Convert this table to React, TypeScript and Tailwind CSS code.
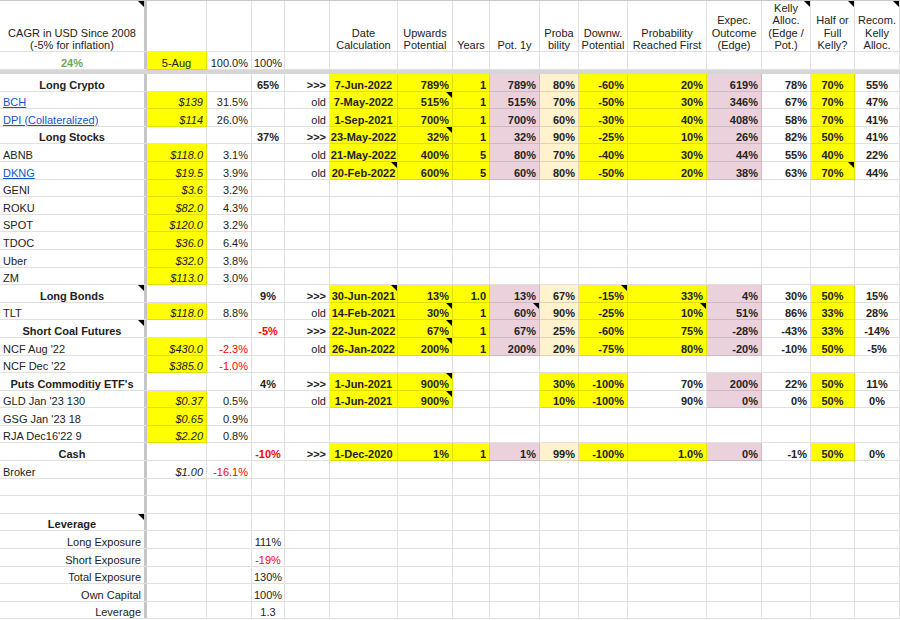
import clsx from "clsx";

type Cl = {
  t?: string;
  a?: "l" | "c" | "r";
  b?: boolean;
  i?: boolean;
  bg?: string;
  red?: boolean;
  green?: boolean;
  link?: boolean;
  tri?: boolean;
};

const Y = "bg-[#ffff00]";
const PK = "bg-[#ead1dc]";
const CR = "bg-[#fff2cc]";

const E: Cl = {};
const empties = (n: number): Cl[] => Array.from({ length: n }, () => ({}));

// F..P calculation block
const calc = (v: string[] | null, tris: number[] = [], puts = false): Cl[] => {
  if (!v) return empties(11);
  const fills = puts
    ? [Y, Y, "", "", Y, Y, "", PK, "", Y, ""]
    : [Y, Y, Y, PK, CR, Y, Y, PK, "", Y, ""];
  const al: ("c" | "r")[] = ["c", "r", "r", "r", "r", "r", "r", "r", "r", "c", "c"];
  return v.map((t, k) => ({ t, a: al[k], b: true, bg: fills[k] || undefined, tri: tris.includes(k) }));
};

type Opt = { red?: boolean; tris?: number[]; aTri?: boolean; puts?: boolean; link?: boolean; noFill?: boolean };

const group = (label: string, pct: string, v: string[], o: Opt = {}): Cl[] => [
  { t: label, a: "c", b: true, tri: o.aTri },
  E,
  E,
  { t: pct, a: "c", b: true, red: o.red },
  { t: ">>>", a: "r", b: true },
  ...calc(v, o.tris, o.puts),
];

const asset = (label: string, price: string, w: string, v: string[] | null = null, o: Opt = {}): Cl[] => [
  { t: label, a: "l", link: o.link },
  { t: price, a: "r", i: true, bg: o.noFill ? undefined : Y },
  { t: w, a: "r", red: o.red },
  E,
  v ? { t: "old", a: "r" } : E,
  ...calc(v, o.tris, o.puts),
];

const lev = (label: string, val: string, red = false): Cl[] => [
  { t: label, a: "r" },
  E,
  E,
  { t: val, a: "c", red },
  ...empties(12),
];

const header: Cl[] = [
  { t: "CAGR in USD Since 2008\n(-5% for inflation)", a: "c", tri: true },
  E,
  E,
  E,
  E,
  { t: "Date\nCalculation", a: "c" },
  { t: "Upwards\nPotential", a: "c" },
  { t: "Years", a: "c" },
  { t: "Pot. 1y", a: "c" },
  { t: "Proba\nbility", a: "c" },
  { t: "Downw.\nPotential", a: "c" },
  { t: "Probability\nReached First", a: "c" },
  { t: "Expec.\nOutcome\n(Edge)", a: "c" },
  { t: "Kelly\nAlloc.\n(Edge /\nPot.)", a: "c", tri: true },
  { t: "Half or\nFull\nKelly?", a: "c", tri: true },
  { t: "Recom.\nKelly\nAlloc.", a: "c", tri: true },
];

const second: Cl[] = [
  { t: "24%", a: "c", b: true, green: true },
  { t: "5-Aug", a: "c", bg: Y },
  { t: "100.0%", a: "r" },
  { t: "100%", a: "c" },
  ...empties(12),
];

const body: Cl[][] = [
  group("Long Crypto", "65%", ["7-Jun-2022", "789%", "1", "789%", "80%", "-60%", "20%", "619%", "78%", "70%", "55%"]),
  asset("BCH", "$139", "31.5%", ["7-May-2022", "515%", "1", "515%", "70%", "-50%", "30%", "346%", "67%", "70%", "47%"], { link: true, tris: [1] }),
  asset("DPI (Collateralized)", "$114", "26.0%", ["1-Sep-2021", "700%", "1", "700%", "60%", "-30%", "40%", "408%", "58%", "70%", "41%"], { link: true }),
  group("Long Stocks", "37%", ["23-May-2022", "32%", "1", "32%", "90%", "-25%", "10%", "26%", "82%", "50%", "41%"], { tris: [1] }),
  asset("ABNB", "$118.0", "3.1%", ["21-May-2022", "400%", "5", "80%", "70%", "-40%", "30%", "44%", "55%", "40%", "22%"]),
  asset("DKNG", "$19.5", "3.9%", ["20-Feb-2022", "600%", "5", "60%", "80%", "-50%", "20%", "38%", "63%", "70%", "44%"], { link: true, tris: [0, 9] }),
  asset("GENI", "$3.6", "3.2%"),
  asset("ROKU", "$82.0", "4.3%"),
  asset("SPOT", "$120.0", "3.2%"),
  asset("TDOC", "$36.0", "6.4%"),
  asset("Uber", "$32.0", "3.8%"),
  asset("ZM", "$113.0", "3.0%"),
  group("Long Bonds", "9%", ["30-Jun-2021", "13%", "1.0", "13%", "67%", "-15%", "33%", "4%", "30%", "50%", "15%"], { tris: [0, 5], aTri: true }),
  asset("TLT", "$118.0", "8.8%", ["14-Feb-2021", "30%", "1", "60%", "90%", "-25%", "10%", "51%", "86%", "33%", "28%"], { tris: [1, 3, 6] }),
  group("Short Coal Futures", "-5%", ["22-Jun-2022", "67%", "1", "67%", "25%", "-60%", "75%", "-28%", "-43%", "33%", "-14%"], { red: true, tris: [1], aTri: true }),
  asset("NCF Aug '22", "$430.0", "-2.3%", ["26-Jan-2022", "200%", "1", "200%", "20%", "-75%", "80%", "-20%", "-10%", "50%", "-5%"], { red: true, tris: [1] }),
  asset("NCF Dec '22", "$385.0", "-1.0%", null, { red: true }),
  group("Puts Commoditiy ETF's", "4%", ["1-Jun-2021", "900%", "", "", "30%", "-100%", "70%", "200%", "22%", "50%", "11%"], { tris: [1], puts: true }),
  asset("GLD Jan '23 130", "$0.37", "0.5%", ["1-Jun-2021", "900%", "", "", "10%", "-100%", "90%", "0%", "0%", "50%", "0%"], { tris: [1], puts: true }),
  asset("GSG Jan '23 18", "$0.65", "0.9%"),
  asset("RJA Dec16'22 9", "$2.20", "0.8%"),
  group("Cash", "-10%", ["1-Dec-2020", "1%", "1", "1%", "99%", "-100%", "1.0%", "0%", "-1%", "50%", "0%"], { red: true }),
  asset("Broker", "$1.00", "-16.1%", null, { red: true, noFill: true }),
  empties(16),
  empties(16),
  [{ t: "Leverage", a: "c", b: true, tri: true }, ...empties(15)],
  lev("Long Exposure", "111%"),
  lev("Short Exposure", "-19%", true),
  lev("Total Exposure", "130%"),
  lev("Own Capital", "100%"),
  lev("Leverage", "1.3"),
];

const Cell = ({ c, first, head }: { c: Cl; first: boolean; head?: boolean }) => (
  <div
    className={clsx(
      "relative flex items-end overflow-hidden border-b border-black/[0.12] px-[3px]",
      first ? "shadow-[inset_-3px_0_0_#c6c6c6] pr-[6px]" : "border-r",
      c.a === "c" ? "justify-center text-center" : c.a === "r" ? "justify-end text-right" : "justify-start text-left",
      head ? "whitespace-pre-line leading-[12.6px]" : "whitespace-nowrap leading-[12px]",
      c.bg ?? "bg-white",
      c.b && "font-bold",
      c.i && "italic",
      c.red ? "text-[#ff0000]" : c.green ? "text-[#6aa84f]" : c.link ? "text-[#1155cc] underline" : "text-[#222]"
    )}
  >
    <span className={clsx("relative", head ? "top-[1px]" : "top-0")}>{c.t}</span>
    {c.tri && (
      <span
        className={clsx(
          "absolute top-0 h-0 w-0 border-l-[6px] border-t-[6px] border-l-transparent border-t-black",
          first ? "right-[3px]" : "right-0"
        )}
      />
    )}
  </div>
);

const App = () => {
  return (
    <div className="h-[620px] w-[900px] overflow-hidden bg-white font-['Liberation_Sans',Arial,sans-serif] text-[11px]">
      <div className="grid grid-cols-[147px_60px_45px_33px_45px_68px_55px_37px_50px_39px_49px_79px_55px_49px_44px_45px] grid-rows-[51px_18px_4px] auto-rows-[17.6px] border-t border-[#c8c8c8]">
        {header.map((c, k) => (
          <Cell key={`h${k}`} c={c} first={k === 0} head />
        ))}
        {second.map((c, k) => (
          <Cell key={`s${k}`} c={c} first={k === 0} />
        ))}
        <div className="col-span-16 bg-[#d6d6d6]" />
        {body.map((row, r) => row.map((c, k) => <Cell key={`${r}-${k}`} c={c} first={k === 0} />))}
      </div>
    </div>
  );
};

export default App;
